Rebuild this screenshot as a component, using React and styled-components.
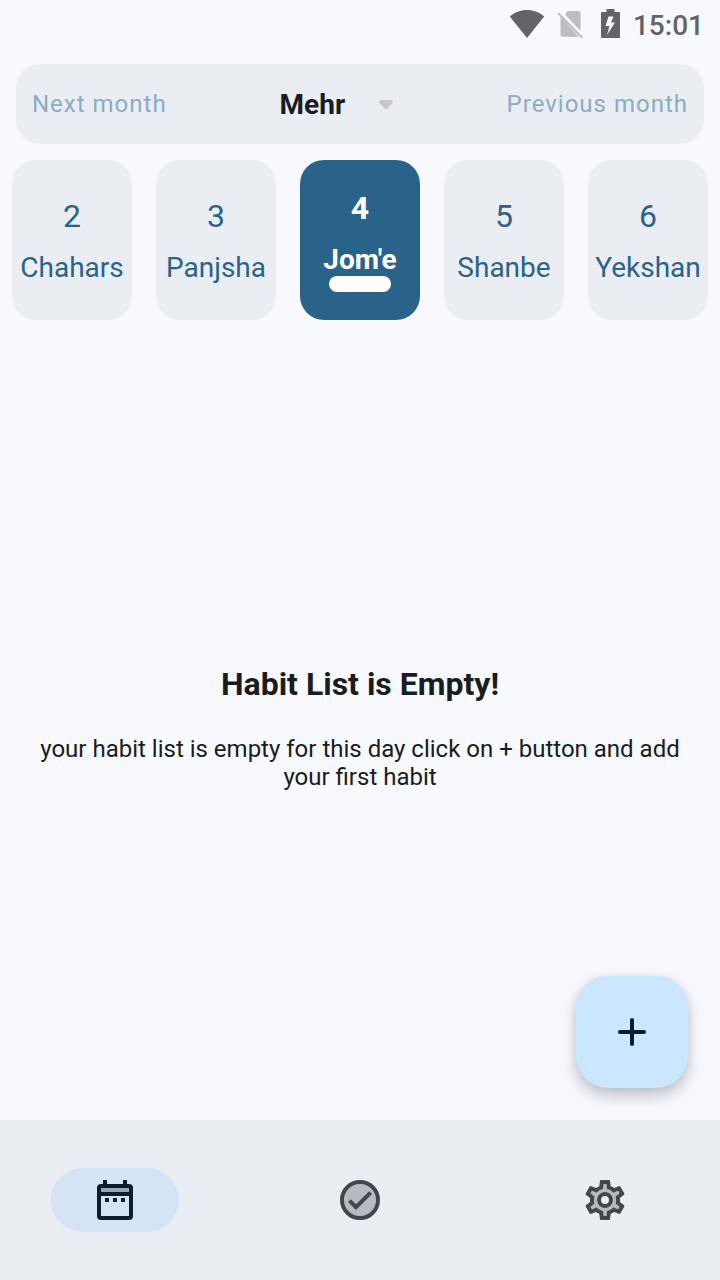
import React, { useState } from "react";
import styled, { createGlobalStyle } from "styled-components";

const GlobalStyle = createGlobalStyle`
  *, *::before, *::after { box-sizing: border-box; }
  body {
    margin: 0;
    background: #f8f9ff;
    color: #191c20;
    font-family: Roboto, "Liberation Sans", sans-serif;
  }
  button, select { font-family: inherit; }
`;

const Screen = styled.div`
  display: flex;
  flex-direction: column;
  min-height: 100vh;
`;

const StatusBar = styled.header`
  display: flex;
  align-items: flex-end;
  justify-content: flex-end;
  gap: 12px;
  height: 48px;
  padding: 0 16px 8px;
  color: #636467;
`;

const StatusIcon = styled.svg`
  display: block;
  height: 32px;
  width: ${(p) => p.$width}px;
`;

const Clock = styled.time`
  font-size: 28px;
  line-height: 28px;
  font-weight: 500;
`;

const MonthBar = styled.section`
  display: flex;
  align-items: center;
  justify-content: space-between;
  height: 80px;
  margin: 16px 16px 0;
  padding: 0 16px;
  border-radius: 24px;
  background: #eaeef3;
`;

const MonthButton = styled.button`
  padding: 0;
  border: 0;
  background: none;
  color: #8aacc4;
  font-size: 24px;
  line-height: 32px;
  letter-spacing: 1px;
  cursor: pointer;
`;

const MonthPicker = styled.label`
  display: grid;
  align-items: center;
  padding-top: 2px;
`;

const MonthSelect = styled.select`
  grid-area: 1 / 1;
  appearance: none;
  padding: 0 48px 0 0;
  border: 0;
  background: none;
  color: #191c20;
  font-size: 28px;
  line-height: 32px;
  font-weight: 700;
`;

const Caret = styled.svg`
  grid-area: 1 / 1;
  justify-self: end;
  width: 16px;
  height: 10px;
  pointer-events: none;
`;

const DayStrip = styled.section`
  display: flex;
  gap: 24px;
  padding: 16px 12px;
`;

const DayCard = styled.button`
  display: flex;
  flex: 1;
  flex-direction: column;
  align-items: center;
  justify-content: center;
  min-width: 0;
  height: 160px;
  padding: 0;
  border: 0;
  border-radius: 24px;
  background: ${(p) => (p.$selected ? "#2a638a" : "#eaeef3")};
  color: ${(p) => (p.$selected ? "#ffffff" : "#2a638a")};
  font-weight: ${(p) => (p.$selected ? 700 : 400)};
  cursor: pointer;
`;

const DayNumber = styled.span`
  margin-bottom: 16px;
  font-size: 32px;
  line-height: 40px;
`;

const DayName = styled.span`
  font-size: 28px;
  line-height: 32px;
`;

const DayMarker = styled.span`
  width: 62px;
  height: 16px;
  border-radius: 8px;
  background: #ffffff;
`;

const Content = styled.main`
  position: relative;
  display: flex;
  flex: 1;
  flex-direction: column;
  align-items: center;
  justify-content: center;
  gap: 32px;
  padding: 32px;
  text-align: center;
`;

const EmptyTitle = styled.h1`
  margin: 0;
  font-size: 32px;
  line-height: 38px;
  font-weight: 700;
`;

const EmptyText = styled.p`
  margin: 0;
  font-size: 24px;
  line-height: 28px;
`;

const AddButton = styled.button`
  position: absolute;
  right: 32px;
  bottom: 32px;
  display: grid;
  place-items: center;
  width: 112px;
  height: 112px;
  padding: 0;
  border: 0;
  border-radius: 32px;
  background: #cbe6ff;
  color: #001e30;
  box-shadow: 0 8px 16px rgba(0, 0, 0, 0.22), 0 0 8px rgba(0, 0, 0, 0.06);
  cursor: pointer;
`;

const NavBar = styled.nav`
  display: flex;
  align-items: center;
  gap: 16px;
  height: 160px;
  background: #eaeef3;
`;

const NavItem = styled.button`
  display: flex;
  flex: 1;
  justify-content: center;
  padding: 0;
  border: 0;
  background: none;
  color: ${(p) => (p.$active ? "#0b1d29" : "#42474e")};
  cursor: pointer;
`;

const NavPill = styled.span`
  display: grid;
  place-items: center;
  width: 128px;
  height: 64px;
  border-radius: 32px;
  background: ${(p) => (p.$active ? "#d4e4f6" : "transparent")};
`;

const Icon = styled.svg`
  display: block;
  width: 48px;
  height: 48px;
  fill: currentColor;
`;

const GEAR_INNER =
  "M17.45 11.27c.04.31.05.52.05.73 0 .21-.02.43-.05.73l-.14 1.13.89.7 1.08.84-.7 1.21-1.27-.51-1.04-.42-.9.68c-.43.32-.84.56-1.25.73l-1.06.43-.16 1.13-.2 1.35h-1.4l-.19-1.35-.16-1.13-1.06-.43c-.43-.18-.83-.41-1.23-.71l-.91-.7-1.06.43-1.27.51-.7-1.21 1.08-.84.89-.7-.14-1.13c-.03-.31-.05-.54-.05-.74s.02-.43.05-.73l.14-1.13-.89-.7-1.08-.84.7-1.21 1.27.51 1.04.42.9-.68c.43-.32.84-.56 1.25-.73l1.06-.43.16-1.13.2-1.35h1.39l.19 1.35.16 1.13 1.06.43c.43.18.83.41 1.23.71l.91.7 1.06-.43 1.27-.51.7 1.21-1.07.85-.89.7.14 1.13z";
const GEAR_OUTER =
  "M19.43 12.98c.04-.32.07-.64.07-.98 0-.34-.03-.66-.07-.98l2.11-1.65c.19-.15.24-.42.12-.64l-2-3.46c-.09-.16-.26-.25-.44-.25-.06 0-.12.01-.17.03l-2.49 1c-.52-.4-1.08-.73-1.69-.98l-.38-2.65C14.46 2.18 14.25 2 14 2h-4c-.25 0-.46.18-.49.42l-.38 2.65c-.61.25-1.17.59-1.69.98l-2.49-1c-.06-.02-.12-.03-.18-.03-.17 0-.34.09-.43.25l-2 3.46c-.13.22-.07.49.12.64l2.11 1.65c-.04.32-.07.65-.07.98 0 .33.03.66.07.98l-2.11 1.65c-.19.15-.24.42-.12.64l2 3.46c.09.16.26.25.44.25.06 0 .12-.01.17-.03l2.49-1c.52.4 1.08.73 1.69.98l.38 2.65c.03.24.24.42.49.42h4c.25 0 .46-.18.49-.42l.38-2.65c.61-.25 1.17-.59 1.69-.98l2.49 1c.06.02.12.03.18.03.17 0 .34-.09.43-.25l2-3.46c.12-.22.07-.49-.12-.64l-2.11-1.65z";
const GEAR_HUB = "M12 8a4 4 0 1 0 0 8 4 4 0 1 0 0-8z";
const GEAR_HOLE = "M12 10a2 2 0 1 0 0 4 2 2 0 1 0 0-4z";

const CalendarIcon = () => (
  <Icon viewBox="0 0 24 24" aria-hidden="true">
    <path opacity=".3" d="M5 6h14v2H5z" />
    <path d="M7 11h2v2H7zm4 0h2v2h-2zm4 0h2v2h-2z" />
    <path
      fillRule="evenodd"
      d="M19 4h-1V2h-2v2H8V2H6v2H5a2 2 0 0 0-2 2v14a2 2 0 0 0 2 2h14a2 2 0 0 0 2-2V6a2 2 0 0 0-2-2zM5 6h14v2H5zm0 4h14v10H5z"
    />
  </Icon>
);

const CheckIcon = () => (
  <Icon viewBox="0 0 24 24" aria-hidden="true">
    <circle cx="12" cy="12" r="8" opacity=".3" />
    <circle cx="12" cy="12" r="9" fill="none" stroke="currentColor" strokeWidth="2" />
    <path d="M16.59 7.58 10 14.17l-2.59-2.58L6 13l4 4 8-8z" />
  </Icon>
);

const SettingsIcon = () => (
  <Icon viewBox="0 0 24 24" aria-hidden="true" fillRule="evenodd">
    <path opacity=".3" d={GEAR_INNER + GEAR_HUB} />
    <path d={GEAR_OUTER + GEAR_INNER} />
    <path d={GEAR_HUB + GEAR_HOLE} />
  </Icon>
);

const DAYS = [
  { number: 2, name: "Chahars" },
  { number: 3, name: "Panjsha" },
  { number: 4, name: "Jom'e" },
  { number: 5, name: "Shanbe" },
  { number: 6, name: "Yekshan" },
];

const TABS = [
  { id: "calendar", label: "Calendar", Glyph: CalendarIcon },
  { id: "habits", label: "Habits", Glyph: CheckIcon },
  { id: "settings", label: "Settings", Glyph: SettingsIcon },
];

export default function App() {
  const [day, setDay] = useState(4);
  const [tab, setTab] = useState("calendar");

  return (
    <>
      <GlobalStyle />
      <Screen>
        <StatusBar>
          <StatusIcon $width={36} viewBox="0 0 36 32" aria-hidden="true">
            <path fill="currentColor" d="M18 30 .8 8.4C5.6 4.4 11.5 2 18 2s12.400 2.400 17.200 6.400z" />
          </StatusIcon>
          <StatusIcon $width={32} viewBox="0 0 32 32" aria-hidden="true">
            <g fill="#bcbdc2">
              <path d="M10.500 3H21Q23.500 3 23.500 5.500V22.800L8 6.600z" />
              <path d="M3.500 8.800 21.800 28.800H5.500Q3.500 28.800 3.500 26.800z" />
              <path d="M1.800 4.400 26 29 24.600 30.400.4 5.800z" />
            </g>
          </StatusIcon>
          <StatusIcon $width={20} viewBox="0 0 20 32" aria-hidden="true">
            <path
              fill="currentColor"
              fillRule="evenodd"
              d="M5.500 1h8v3h4.500q1 0 1 1v24q0 1-1 1H1q-1 0-1-1V5q0-1 1-1h4.500zM12.500 8.500H7.500L4.500 18h4L6 27 14 14.500h-4z"
            />
          </StatusIcon>
          <Clock dateTime="15:01">15:01</Clock>
        </StatusBar>

        <MonthBar>
          <MonthButton type="button">Next month</MonthButton>
          <MonthPicker>
            <MonthSelect aria-label="Month" defaultValue="Mehr">
              <option>Mehr</option>
            </MonthSelect>
            <Caret viewBox="0 0 16 10" aria-hidden="true">
              <path
                fill="#c8c8c8"
                d="M2.500 0h11Q15 0 15 1.500 15 2.400 14.200 3.200L9.400 8.400Q8 9.800 6.600 8.400L1.800 3.200Q1 2.400 1 1.500 1 0 2.500 0z"
              />
            </Caret>
          </MonthPicker>
          <MonthButton type="button">Previous month</MonthButton>
        </MonthBar>

        <DayStrip>
          {DAYS.map((d) => (
            <DayCard
              key={d.number}
              type="button"
              $selected={d.number === day}
              aria-pressed={d.number === day}
              onClick={() => setDay(d.number)}
            >
              <DayNumber>{d.number}</DayNumber>
              <DayName>{d.name}</DayName>
              {d.number === day && <DayMarker />}
            </DayCard>
          ))}
        </DayStrip>

        <Content>
          <EmptyTitle>Habit List is Empty!</EmptyTitle>
          <EmptyText>
            your habit list is empty for this day click on + button and add your first habit
          </EmptyText>
          <AddButton type="button" aria-label="Add habit">
            <Icon viewBox="0 0 24 24" aria-hidden="true">
              <path d="M12 6v12M6 12h12" stroke="currentColor" strokeWidth="2" strokeLinecap="round" />
            </Icon>
          </AddButton>
        </Content>

        <NavBar>
          {TABS.map(({ id, label, Glyph }) => (
            <NavItem
              key={id}
              type="button"
              aria-label={label}
              $active={id === tab}
              onClick={() => setTab(id)}
            >
              <NavPill $active={id === tab}>
                <Glyph />
              </NavPill>
            </NavItem>
          ))}
        </NavBar>
      </Screen>
    </>
  );
}
